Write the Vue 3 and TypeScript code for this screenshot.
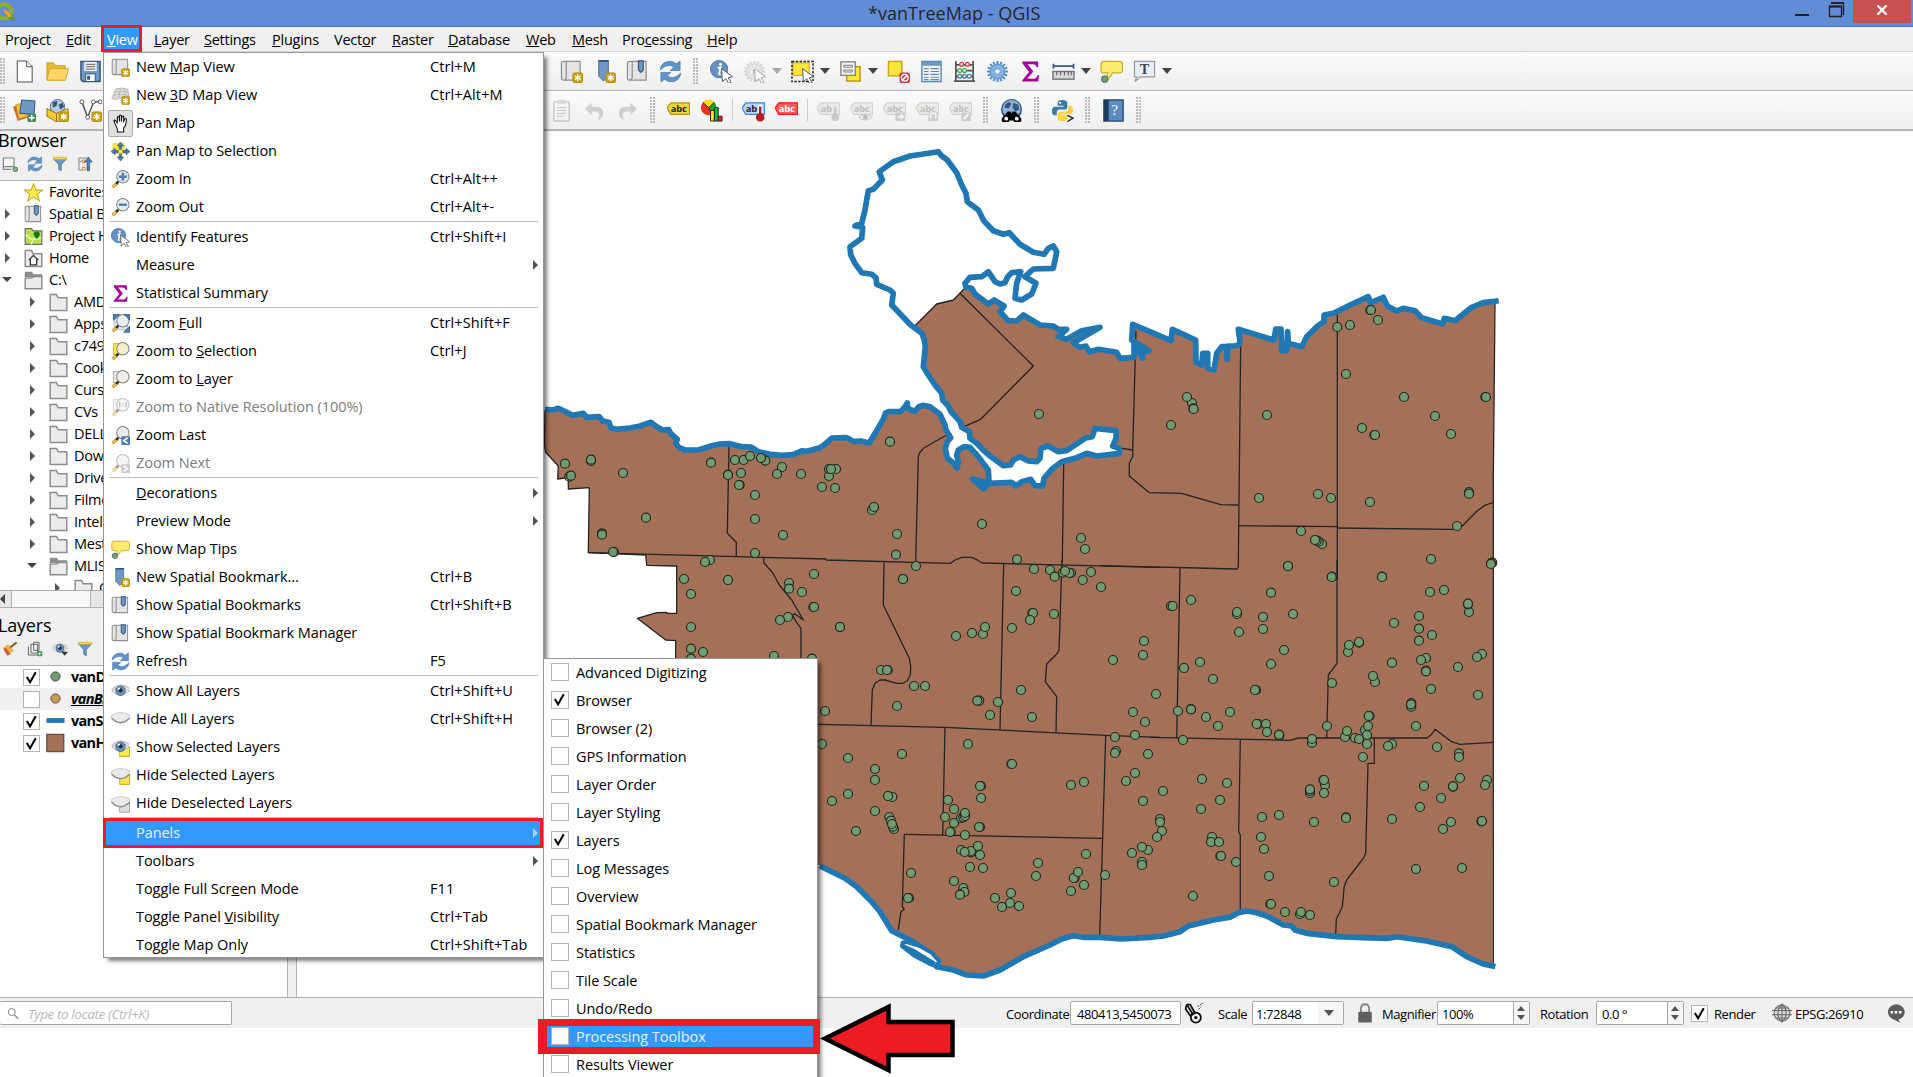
<script setup lang="ts">
interface Item {
  label: string
  key?: string
  icon?: string
  sub?: boolean
  off?: boolean
  sep?: boolean
  held?: boolean
  on?: boolean
}
interface Tool {
  icon: string
  kind?: 'arrow' | 'grip' | 'line' | 'gap'
  w?: number
  off?: boolean
}
interface Node {
  label: string
  icon: string
  level: number
  exp?: 'open' | 'closed'
}

const star = '<rect x="13.500" y="13.500" width="10" height="10" rx="1.500" fill="#c9a415" stroke="#b08c0c"/><path d="M18.500 15v7M15.500 16.700l6 3.600M21.500 16.700l-6 3.600" stroke="#fff" stroke-width="1.500"/>'
const lens = (fill: string) => `<path d="M8.500 15.500L2 22" stroke="#a8893a" stroke-width="4"/><path d="M8 16L2 22" stroke="#f0c94e" stroke-width="2"/><path d="M9.500 14.500l-3 3" stroke="#222" stroke-width="2.600"/><circle cx="15" cy="8.500" r="7.800" fill="${fill}" stroke="#808080" stroke-width="1.300"/>`
const cursor = '<path d="M12 9l11.500 8.500-4.500 1 3 5-2.500 1-3-5-3.500 3z" fill="#fff" stroke="#555" stroke-width="1"/>'
const book = '<path d="M1.500 3.500q0-2 2-2h3v17l-1.500 2.500h-1.500q-2 0-2-2zM6.500 1.500h14.500v19.500H5" fill="#e4e4e4" stroke="#909090" stroke-width="1.300"/>'
const ribbon = '<path d="M13 1h5v9.500l-2.500 2.500-2.500-2.500z" fill="#6d97c4" stroke="#38597f" stroke-width="1.300"/>'
const tag = (fill: string, line: string, txt: string, t = 'abc') => `<path d="M0 9.500L4 4h19.500v12H4z" fill="${fill}" stroke="${line}" stroke-width="1.300"/><text x="4" y="13.300" font-size="9.800" font-weight="bold" fill="${txt}" font-family="Open Sans, sans-serif">${t}</text>`
const eye = '<path d="M1 9.500Q11 -1 23 8" fill="none" stroke="#bbb" stroke-width="1.500"/><path d="M1 11.500Q12 1.500 23.500 11Q12 22 1 11.500z" fill="#e9e9e9" stroke="#aaa"/><circle cx="12" cy="11" r="6" fill="#6d93bd" stroke="#38597f"/><circle cx="12" cy="10.500" r="2.700" fill="#16293f"/><circle cx="10" cy="8.500" r="1.400" fill="#fff"/>'
const lid = '<path d="M.5 7Q11 0 23.500 6v4Q12 22 .5 9z" fill="#eaeae8" stroke="#c4c4c4"/><path d="M.5 10Q12 22 23.500 10" fill="none" stroke="#8d8d8d" stroke-width="1.800"/>'
const sync = '<path d="M1.500 10.500C1 3 11-2 18 4L22 1v10H11.500l4-3.500C11 4 5.500 6 1.500 10.500z" fill="#5f93cc" stroke="#4677aa" stroke-width=".7"/><path d="M22.500 13.500C23 21 13 26 6 20L2 23V13h10.500l-4 3.500C13 20 18.500 18 22.500 13.500z" fill="#5f93cc" stroke="#4677aa" stroke-width=".7"/>'
const bubble = '<path d="M4 1.500h16q3.500 0 3.500 3v6q0 3-3.500 3h-7q-2 5-7 7 2-3 2-7H4q-3 0-3-3v-6q0-3 3-3z" fill="#fcea6f" stroke="#c9ac2c" stroke-width="1.200"/><circle cx="5" cy="20" r="3.500" fill="#72a06d" stroke="#567"/>'
const gear = (fill: string, line: string) => `<path d="M12 1v22M1 12h22M4.200 4.200l15.600 15.600M19.800 4.200L4.200 19.800M7.800 1.900l8.400 20.200M16.200 1.900L7.800 22.100M1.900 7.800l20.200 8.400M22.100 7.800L1.900 16.200" stroke="${line}" stroke-width="2.200"/><circle cx="12" cy="12" r="7.500" fill="${fill}" stroke="${line}"/><circle cx="12" cy="12" r="3" fill="#f5f5f5" stroke="${line}"/>`
const folder = '<path d="M1.500 2h8l2 4H22.500v16H1.500z" fill="#ececec" stroke="#8c8c8c" stroke-width="1.800"/>'
const funnel = '<path d="M2 4h20l-8 9v9l-4-2v-7z" fill="#6d97c4" stroke="#45698f"/><path d="M2 2h20v3H2z" fill="#ffe54f" stroke="#c9a415"/>'
const slip = '<path d="M13 20l5 3 5-10v10H11z" fill="#ffe74f" stroke="#c9a415"/><rect x="11" y="12" width="12.500" height="11" fill="#ffe74f" stroke="#c9a415"/>'

const icons: Record<string, string> = {
  page: '<path d="M4.500 1h9.500l6 6v16h-15.500z" fill="#fff" stroke="#555" stroke-width="1.100"/><path d="M14 1v6h6" fill="#eee" stroke="#555"/>',
  open: '<path d="M1 21V3h7l2 3h10v15z" fill="#e8b836" stroke="#c59b28"/><path d="M1 21L4 9h19.500l-3 12z" fill="#fdd667" stroke="#d5a72e"/>',
  save: '<path d="M2 1.500h20V22.500H4l-2-2z" fill="#6d97c4" stroke="#35557a" stroke-width="1.500"/><rect x="5.500" y="2" width="13" height="9.500" fill="#f5f5f5"/><path d="M7 4.500h10M7 7h10M7 9.500h10" stroke="#555"/><rect x="7" y="14.500" width="10" height="8" fill="#f5f5f5" stroke="#35557a"/><rect x="8.500" y="16.500" width="3" height="4" fill="#35557a"/>',
  datasrc: '<path d="M0 8l12-4 5 15-12 4z" fill="#d8692a"/><path d="M3 6l13-3 3 14-13 4z" fill="#f5c13a" stroke="#b98a1e" stroke-width=".7"/><path d="M9 1l14 1-1 14-15-1z" fill="#6d97c4" stroke="#35557a"/><rect x="15" y="15" width="9" height="9" rx="1.500" fill="#4d8a58"/><path d="M19.500 16.500v6M16.500 19.500h6" stroke="#fff" stroke-width="1.500"/>',
  geopkg: '<circle cx="12" cy="8" r="7.500" fill="#b6cbe2" stroke="#4d6d92"/><path d="M7 3l5-1-1 5-4 2zM13 6l4-2 2 4-4 3z" fill="#35557a"/><path d="M1 10l10 5v9L1 18z" fill="#f2cb2f" stroke="#8c6f10"/><path d="M11 15l12-5v8l-12 6z" fill="#ffe461" stroke="#8c6f10"/>' + star,
  vnew: '<path d="M3 3l6 16L15 4l7-2" fill="none" stroke="#555" stroke-width="1.500"/><circle cx="3" cy="3" r="2" fill="#fff" stroke="#555"/><circle cx="9" cy="19" r="2" fill="#fff" stroke="#555"/><circle cx="15" cy="3" r="2" fill="#fff" stroke="#555"/><circle cx="22" cy="3" r="2" fill="#fff" stroke="#555"/>' + star,
  mapnew: book + star,
  map3d: '<path d="M6 4q7-3 15 0l2 10q-9-2-16 3l-6-1z" fill="#ddd" stroke="#aaa"/><path d="M5 8q8-3 17 0M3 12q8-3 19 0M12 3l-2 11M17 3l1 10" fill="none" stroke="#b4b4b4"/>' + star,
  hand: '<path d="M5 12L3.500 8.500q1-1.500 2.500 0l2 3V4q1-1.500 2.200 0l.5 5V2q1.200-1.500 2.300 0v7l1-6q1.300-1 2.200.500l-.400 6.500L17.500 6q1.300-.800 2 .8-.5 8-3.500 11v5H8v-4z" fill="#fff" stroke="#111" stroke-width="1.300" stroke-linejoin="round"/>',
  pansel: '<rect x="2" y="1" width="15" height="14" fill="#f7e23a"/><path d="M12 0l4 5h-8zM12 24l4-5h-8zM0 12l5-4v8zM24 12l-5-4v8zM10.500 5h3v4h-3zM10.500 15h3v4h-3zM5 10.500h4v3H5zM15 10.500h4v3h-4z" fill="#5380b0" stroke="#35557a" stroke-width=".8"/>',
  zoomin: lens('#dfe9f4') + '<path d="M15 3.500v10M10 8.500h10" stroke="#4f7fb3" stroke-width="3"/>',
  zoomout: lens('#e9edf2') + '<path d="M10 8.500h10" stroke="#4f7fb3" stroke-width="3"/>',
  identify: '<circle cx="9.500" cy="9.500" r="9" fill="#6490c3" stroke="#4d76a5"/><path d="M8 8.500l3-.8-1.500 7q0 1 1.500 0" fill="none" stroke="#fff" stroke-width="2"/><circle cx="11" cy="4.500" r="1.500" fill="#fff"/>' + cursor,
  sigma: '<path d="M3.500 1.500h16.500v6h-1.500q-.8-3-3.500-3H9l6 7.500-6.500 7.500h7q3 0 3.800-3.500h1.700l-1 6.500H3.500v-1.500l7-8.500-7-9z" fill="#a8009c"/>',
  zoomfull: '<path d="M4 2h17v18H4z" fill="#e3eaf2" stroke="#9fb4cb"/>' + lens('#e8edf3') + '<path d="M3 0h8L3 8zM24 0v8l-8-8zM24 23h-8l8-8z" fill="#4f7fb3" stroke="#35557a"/>',
  zoomsel: '<path d="M3 2h9v14H3z" fill="#ffe94f" stroke="#c9a415"/>' + lens('#f0efc8'),
  zoomlay: '<path d="M3 2h9v14H3z" fill="#ececec" stroke="#999"/>' + lens('#efefec'),
  zoomnat: '<path d="M3 2h9v14H3z" fill="#ececec" stroke="#999"/>' + lens('#efefec') + '<path d="M11 5v7M15 6v1M15 9v1M19 5v7" stroke="#777" stroke-width="1.500"/>',
  zoomlast: lens('#eceeec') + '<rect x="13" y="13" width="11" height="11" fill="#4f7fb3"/><path d="M21 15l-5 3.500 5 3.500" fill="none" stroke="#fff" stroke-width="2"/>',
  zoomnext: lens('#eceeec') + '<rect x="13" y="13" width="11" height="11" fill="#999"/><path d="M16 15l5 3.500-5 3.500" fill="none" stroke="#fff" stroke-width="2"/>',
  tips: bubble,
  bmnew: '<path d="M6 0h10v17l-5 5-5-5z" fill="#6d97c4" stroke="#4a6f99"/><path d="M6 1h10" stroke="#35557a" stroke-width="2"/>' + star,
  bm: book + ribbon,
  sync,
  eye,
  lid,
  eyesel: slip + eye,
  lidsel: slip + lid,
  liddes: '<rect x="11" y="12" width="12.500" height="11" fill="#ddd" stroke="#999"/>' + lid,
  play: gear('#e2e2e2', '#b5b5b5') + '<circle cx="12" cy="12" r="5" fill="#eee" stroke="#aaa"/><path d="M10 9l5 3-5 3z" fill="#999"/>' + cursor,
  select: '<path d="M2 3h17v13H2z" fill="#ffe53f" stroke="#c9a415"/><path d="M1 1.500h22v21H1z" fill="none" stroke="#222" stroke-width="1.500" stroke-dasharray="2.500 1.500"/>' + cursor,
  form: '<rect x="8" y="7" width="14" height="15" fill="#ffe53f" stroke="#b8960f" stroke-width="1.500"/><rect x="2" y="2" width="15" height="14" fill="#f3f3f3" stroke="#888" stroke-width="1.500"/><path d="M5 5.500h9v2H5zM5 10.500h9v2H5z" fill="#fff" stroke="#777"/>',
  desel: '<rect x="1.500" y="1.500" width="14" height="15" fill="#ffe53f" stroke="#c9a415" stroke-width="1.500"/><rect x="13" y="13" width="11" height="11" rx="2" fill="#d73a45"/><circle cx="18.500" cy="18.500" r="3.500" fill="none" stroke="#fff" stroke-width="1.500"/><path d="M16 21l5-5" stroke="#fff" stroke-width="1.500"/>',
  table: '<rect x="2" y="1.500" width="20" height="21" fill="#f4f8fc" stroke="#5c88b8" stroke-width="1.500"/><path d="M2 2h20v4H2z" fill="#6d97c4"/><path d="M4 9h5M11 9h9M4 12h5M11 12h9M4 15h5M11 15h9M4 18h5M11 18h9M4 20.500h5M11 20.500h9" stroke="#5c88b8" stroke-width="1.300"/>',
  abacus: '<path d="M3 1v20M21 1v20M1 22h22M3 5h18M3 11h18M3 17h18" stroke="#555" stroke-width="1.800"/><g fill="#fff" stroke-width="1.300"><circle cx="9" cy="4.500" r="2" stroke="#d33"/><circle cx="15" cy="4.500" r="2" stroke="#d33"/><circle cx="7" cy="11" r="2" stroke="#4a4"/><circle cx="12" cy="11" r="2" stroke="#4a4"/><circle cx="7" cy="17" r="2" stroke="#47a"/><circle cx="12" cy="17" r="2" stroke="#47a"/><circle cx="17" cy="17" r="2" stroke="#47a"/></g>',
  gear: gear('#86b2e2', '#5b8fc9'),
  ruler: '<path d="M1 6.500h22M1.500 4v5M22.500 4v5" stroke="#3a5980" stroke-width="1.800"/><rect x="1" y="12" width="22" height="8" fill="#d9d9d9" stroke="#777" stroke-width="1.500"/><path d="M5 12v4M9 12v4M13 12v4M17 12v4M20 12v4" stroke="#555"/>',
  note: '<path d="M1.500 1.500h21v16H8L2 22.500l2-5H1.500z" fill="#e8eef5" stroke="#999" stroke-width="1.300"/><text x="7" y="14.500" font-size="15" font-weight="bold" fill="#444" font-family="Liberation Serif, serif">T</text>',
  paste: '<rect x="4" y="3" width="16" height="20" rx="1" fill="#f4f4f4" stroke="#999" stroke-width="1.500"/><rect x="8" y="1" width="8" height="4" fill="#bbb"/><path d="M7 9h10M7 12h10M7 15h10M7 18h7" stroke="#999"/>',
  undo: '<path d="M9 4v4h5q7 0 7 7 0 5-6 7 2-2 2-5 0-4-4-4H9v4L2 10z" fill="#b0a9a9"/>',
  redo: '<path d="M15 4v4h-5q-7 0-7 7 0 5 6 7-2-2-2-5 0-4 4-4h4v4l7-7z" fill="#a9ada9"/>',
  abc: tag('#f0d43a', '#b39510', '#222'),
  diagram: '<circle cx="9" cy="9" r="8" fill="#e32"/><path d="M9 9L3 3.500A8 8 0 0 1 15 3.500z" fill="#ffe000"/><path d="M9 9L15 3.500A8 8 0 0 1 13 16z" fill="#1a2"/><path d="M9 9L3 3.500M9 9l6-5.500M9 9l4 7" stroke="#222"/><path d="M11 12h4v11h-4z" fill="#fe0" stroke="#222"/><path d="M15 9h4v14h-4z" fill="#1b3" stroke="#222"/><path d="M19 18h4v5h-4z" fill="#e22" stroke="#222"/>',
  abpin: tag('#b9d7ff', '#3b83e6', '#222', 'ab') + '<path d="M19 6v11" stroke="#fff" stroke-width="4"/><path d="M19 8v9" stroke="#a22" stroke-width="2.500"/><circle cx="19" cy="19" r="4.500" fill="#b31f1f"/>',
  abred: tag('#ff5d5d', '#ff1515', '#fff'),
  dpin: tag('#e0e0da', '#b5b5a8', '#888', 'ab') + '<path d="M19 8v9" stroke="#999" stroke-width="2.500"/><circle cx="19" cy="19" r="4" fill="#a5a0a0"/>',
  deye: tag('#e0e0da', '#b5b5a8', '#888') + '<path d="M9 19q7-6 14 0-7 6-14 0z" fill="#eee" stroke="#999"/><circle cx="16" cy="19" r="2.500" fill="#888"/>',
  dmove: tag('#e0e0da', '#b5b5a8', '#888') + '<rect x="13" y="14" width="10" height="9" fill="#aaa"/><path d="M15 18.500h6M18.500 16l2.500 2.500-2.500 2.500" stroke="#fff" fill="none" stroke-width="1.500"/>',
  drot: tag('#e0e0da', '#b5b5a8', '#888') + '<rect x="13" y="14" width="10" height="9" fill="#aaa"/><path d="M16 20a3 3 0 1 1 4 0" stroke="#fff" fill="none" stroke-width="1.500"/>',
  dedit: tag('#e0e0da', '#b5b5a8', '#888') + '<rect x="13" y="14" width="10" height="9" fill="#aaa"/><path d="M15.500 21l5-5.500" stroke="#fff" stroke-width="1.800"/>',
  meta: '<circle cx="12" cy="11" r="11" fill="#35557a"/><circle cx="12" cy="10.500" r="9.500" fill="#8fb3da"/><path d="M5 6l4-3 3 2-3 5-4-1zM14 4l5 2 1 5-4 2-3-4z" fill="#35557a"/><path d="M8 13h3l1 2 1-2h3l6 7a4 4 0 0 1-8 2.500h-4a4 4 0 0 1-8-2.500z" fill="#000"/><circle cx="6.500" cy="20.500" r="2" fill="#fff"/><circle cx="17.500" cy="20.500" r="2" fill="#fff"/>',
  python: '<path d="M11.500 1Q7 1 7 4v3h6v1H4q-3 0-3 5 0 4 3 4h2v-3q0-3 3-3h5q3 0 3-3V4q0-3-5.500-3z" fill="#3b77a8"/><circle cx="9.500" cy="4" r="1.100" fill="#fff"/><path d="M12.500 23q4.500 0 4.500-3v-3h-6v-1h9q3 0 3-4 0-5-3-5h-2v3q0 3-3 3h-5q-3 0-3 3v4q0 3 5.500 3z" fill="#ffd243"/><path d="M17 17l6 3-6 3.500" fill="none" stroke="#333" stroke-width="1.500"/>',
  help: '<rect x="2" y="1" width="20" height="22" fill="#5a8cc4" stroke="#2f4d72" stroke-width="1.500"/><rect x="2" y="1" width="5" height="22" fill="#1f3b5a"/><text x="10" y="17" font-size="15" fill="#fff" font-family="Liberation Serif, serif">?</text>',
  addlayer: '<path d="M2 3h16v13H2z" fill="#f5f5f5" stroke="#888" stroke-width="1.800"/><path d="M2 15v5h12" fill="none" stroke="#888" stroke-width="1.800"/><circle cx="20" cy="20" r="3.500" fill="#7fb583" stroke="#4d8a58" stroke-width="1.500"/>',
  funnel,
  collapse: '<path d="M3 3v18h5M3 8h4M3 3h16" fill="none" stroke="#888" stroke-width="1.500"/><path d="M8 6h4v4H8zM8 17h4v4H8z" fill="#fff" stroke="#e08020" stroke-width="1.500"/><path d="M17 2l6 7h-4v13h-4V9h-4z" fill="#5380b0" stroke="#35557a"/>',
  fav: '<path d="M12 1l3 8h8.500l-6.800 5 2.600 8.500L12 17.500l-7.300 5L7.300 14 .5 9H9z" fill="#fff04d" stroke="#cba61c" stroke-width="1.300"/>',
  projhome: '<path d="M1.500 2h8l2 3H22.500v17H1.500z" fill="#b8e04a" stroke="#6b6b6b" stroke-width="1.500"/><path d="M2 10l8 6 12-2M9 22l3-8" fill="none" stroke="#eaf7c0" stroke-width="2"/><path d="M12 8q5-5 8 0 0 5-4 7-4-3-4-7z" fill="#157a1c"/>',
  home: folder + '<path d="M6 14l6-6 6 6M8 13v7h8v-7" fill="#fff" stroke="#333" stroke-width="1.600"/>',
  folder,
  opened: '<path d="M1 1h9l2 3h11v4H1z" fill="#8c8c8c"/><path d="M1.500 9h8l3-2h10v15.500H1.500z" fill="#ececec" stroke="#8c8c8c" stroke-width="1.800"/>',
  style: '<path d="M1 10l8-5 8 9-7 7z" fill="#f2c23c"/><path d="M2 12l4-2 7 10-5 2z" fill="#e0573a"/><path d="M12 10L22 2" stroke="#9a6a2c" stroke-width="3.500"/><path d="M7 7l9 9" stroke="#d8b15a" stroke-width="4"/>',
  addgroup: '<path d="M2 8v13h13M6 5v13h10V5z M10 2v12h8V2z" fill="#eee" stroke="#666" stroke-width="1.500"/><rect x="15" y="15" width="8" height="8" rx="2" fill="#4d9a58"/><path d="M19 16.500v5M16.500 19h5" stroke="#fff"/>',
  eyemenu: eye + '<path d="M14 16h10l-5 6z" fill="#333"/>',
  lock: '<path d="M6.500 11V7q0-5.500 5.500-5.500T17.500 7v4" fill="none" stroke="#888" stroke-width="2.500"/><rect x="3" y="10.500" width="18" height="13" rx="1.500" fill="#5f5f5f"/>',
  globe: '<circle cx="12" cy="12" r="9.500" fill="#ddd" stroke="#777" stroke-width="1.500"/><path d="M0 9h24M0 14h24M4 6h16M4 18h16M12 1v22M12 1q-10 11 0 22M12 1q10 11 0 22" fill="none" stroke="#666" stroke-width="1.300"/>',
  chat: '<path d="M12 1.500a11 9.500 0 0 1 3 18.500l2 4-7-4a11 9.500 0 0 1 2-18.500z" fill="#5c5c5c"/><path d="M5.500 11h3M10.500 11h3M15.500 11h3" stroke="#fff" stroke-width="3"/>',
  track: '<g fill="none" stroke="#111" stroke-width="2"><path d="M3 8l5 7 5-3-5-9q-5-2-5 5zM5 4l6 10"/><circle cx="14" cy="17" r="5.500"/></g><circle cx="14" cy="17" r="1.800"/><path d="M16 5l6-4M17 8l3-3" stroke="#111" stroke-dasharray="2 1"/>',
  find: '<circle cx="9.500" cy="9" r="7" fill="none" stroke="#888" stroke-width="2"/><path d="M14.500 14.500l8 8" stroke="#888" stroke-width="2.500"/>',
}

const bar = ['Pro_ject', '_Edit', '_View', '_Layer', '_Settings', '_Plugins', 'Vect_or', '_Raster', '_Database', '_Web', '_Mesh', 'Pro_cessing', '_Help']

const menu: Item[] = [
  { label: 'New _Map View', key: 'Ctrl+M', icon: 'mapnew' },
  { label: 'New _3D Map View', key: 'Ctrl+Alt+M', icon: 'map3d' },
  { label: 'Pan Map', icon: 'hand', held: true },
  { label: 'Pan Map to Selection', icon: 'pansel' },
  { label: 'Zoom In', key: 'Ctrl+Alt++', icon: 'zoomin' },
  { label: 'Zoom Out', key: 'Ctrl+Alt+-', icon: 'zoomout' },
  { label: 'Identify Features', key: 'Ctrl+Shift+I', icon: 'identify', sep: true },
  { label: 'Measure', sub: true },
  { label: 'Statistical Summary', icon: 'sigma' },
  { label: 'Zoom _Full', key: 'Ctrl+Shift+F', icon: 'zoomfull', sep: true },
  { label: 'Zoom to _Selection', key: 'Ctrl+J', icon: 'zoomsel' },
  { label: 'Zoom to _Layer', icon: 'zoomlay' },
  { label: 'Zoom to Native Resolution (100%)', icon: 'zoomnat', off: true },
  { label: 'Zoom Last', icon: 'zoomlast' },
  { label: 'Zoom Next', icon: 'zoomnext', off: true },
  { label: '_Decorations', sub: true, sep: true },
  { label: 'Preview Mode', sub: true },
  { label: 'Show Map Tips', icon: 'tips' },
  { label: 'New Spatial Bookmark...', key: 'Ctrl+B', icon: 'bmnew' },
  { label: 'Show Spatial Bookmarks', key: 'Ctrl+Shift+B', icon: 'bm' },
  { label: 'Show Spatial Bookmark Manager', icon: 'bm' },
  { label: 'Refresh', key: 'F5', icon: 'sync' },
  { label: 'Show All Layers', key: 'Ctrl+Shift+U', icon: 'eye', sep: true },
  { label: 'Hide All Layers', key: 'Ctrl+Shift+H', icon: 'lid' },
  { label: 'Show Selected Layers', icon: 'eyesel' },
  { label: 'Hide Selected Layers', icon: 'lidsel' },
  { label: 'Hide Deselected Layers', icon: 'liddes' },
  { label: 'Panels', sub: true, sep: true, on: true },
  { label: 'Toolbars', sub: true },
  { label: 'Toggle Full Scr_een Mode', key: 'F11' },
  { label: 'Toggle Panel _Visibility', key: 'Ctrl+Tab' },
  { label: 'Toggle Map Only', key: 'Ctrl+Shift+Tab' },
]

const panels = ['Advanced Digitizing', 'Browser', 'Browser (2)', 'GPS Information', 'Layer Order', 'Layer Styling', 'Layers', 'Log Messages', 'Overview', 'Spatial Bookmark Manager', 'Statistics', 'Tile Scale', 'Undo/Redo', 'Processing Toolbox', 'Results Viewer']
const shown = ['Browser', 'Layers']

const gap = (w: number): Tool => ({ icon: '', kind: 'gap', w })
const grip: Tool = { icon: '', kind: 'grip' }
const line: Tool = { icon: '', kind: 'line' }
const arrow: Tool = { icon: '', kind: 'arrow' }
const t = (icon: string, off = false): Tool => ({ icon, off })

const row1: Tool[] = [
  grip, t('page'), t('open'), t('save'), gap(448), t('mapnew'), t('bmnew'), t('bm'), t('sync'), gap(6), grip,
  t('identify'), t('play', true), { ...arrow, off: true }, t('select'), arrow, t('form'), arrow, t('desel'), t('table'),
  t('abacus'), t('gear'), t('sigma'), t('ruler'), arrow, t('tips'), t('note'), arrow,
]
const row2: Tool[] = [
  grip, t('datasrc'), t('geopkg'), t('vnew'), gap(438), t('paste', true), t('undo', true), t('redo', true), gap(6), grip,
  t('abc'), t('diagram'), gap(3), line, gap(3), t('abpin'), t('abred'), gap(3), line, gap(3),
  t('dpin', true), t('deye', true), t('dmove', true), t('drot', true), t('dedit', true), gap(6), grip, t('meta'),
  gap(6), grip, t('python'), gap(6), grip, t('help'), gap(6), grip,
]

const tree: Node[] = [
  { label: 'Favorites', icon: 'fav', level: 0 },
  { label: 'Spatial Bookmarks', icon: 'bm', level: 0, exp: 'closed' },
  { label: 'Project Home', icon: 'projhome', level: 0, exp: 'closed' },
  { label: 'Home', icon: 'home', level: 0, exp: 'closed' },
  { label: 'C:\\', icon: 'opened', level: 0, exp: 'open' },
  ...['AMD', 'Apps', 'c749', 'Cookies', 'Cursor', 'CVs', 'DELL', 'Downloads', 'Drivers', 'Filmes', 'Intel', 'Mestrado'].map(
    (label): Node => ({ label, icon: 'folder', level: 1, exp: 'closed' }),
  ),
  { label: 'MLIS', icon: 'opened', level: 1, exp: 'open' },
  { label: 'Courses', icon: 'folder', level: 2, exp: 'closed' },
]

const layers = [
  { label: 'vanDrinking', on: true, shape: 'dot', color: '#729b6f' },
  { label: 'vanBike', on: false, shape: 'dot', color: '#c89b57', active: true },
  { label: 'vanShore', on: true, shape: 'line', color: '#1f78b4' },
  { label: 'vanHoods', on: true, shape: 'area', color: '#a57058' },
]

// "_" marks the mnemonic letter of a label
function parts(label: string) {
  const i = label.indexOf('_')
  return i < 0 ? [label, '', ''] : [label.slice(0, i), label[i + 1], label.slice(i + 2)]
}

// Map data is digitised per sheet: an origin on the canvas and third-pixel offsets
type Pt = [number, number]
const sheets: Record<string, Pt> = { A: [540, 380], B: [840, 140], C: [1100, 280], D: [820, 560], E: [1150, 560] }
function at(sheet: string, src: string): Pt[] {
  const [ox, oy] = sheets[sheet]
  return src.trim().split(/\s+/).map((p) => {
    const [x, y] = p.split(',').map(Number)
    return [ox + x / 3, oy + y / 3] as Pt
  })
}
const join = (pts: Pt[]) => pts.map(([x, y]) => `${x.toFixed(1)},${y.toFixed(1)}`).join(' ')

const west = at('A', '15,88 38,90 55,85 80,97 98,106 130,100 140,112 178,110 188,123 207,127 212,143 228,148 270,144 300,138 333,127 350,140 368,150 386,149 392,160 412,178 407,190 418,203 435,210 475,210 515,197 540,192 570,191 605,200 634,201 655,215 690,223 725,226 760,224 787,212 800,214 840,203 858,190 875,174 920,173 940,184 962,183 988,189 1008,155 1030,118 1036,100 1045,95 1082,94 1092,84 1102,69 1103,85 1125,94 1137,80 1150,76 1170,80 1200,103')
const creek = at('B', '300,823 315,855 318,870 332,893 322,905 316,925 322,955 340,968 351,985 355,965 350,945 355,930 372,920 390,922 415,950 445,990 447,1025 432,1047 398,1017 447,1030 515,1027 528,1038 545,1025 572,1018 585,1037 608,1038 612,1015 635,988 665,965 710,953 740,940 770,948 838,940 838,925 818,918 828,895 828,872 765,865 757,890 735,895 710,912 680,932 655,935 625,918 603,925 600,955 590,965 565,963 540,950 520,960 512,975 490,977 455,952 435,935 410,910 390,895 388,875 365,862 360,845 333,815 325,798 308,780 305,760 285,735 265,705 250,680 256,620 253,600 245,580 212,555')
const park = at('B', '212,555 155,495 160,460 150,450 110,433 108,413 95,403 65,398 45,370 32,345 30,320 65,295 68,262 45,258 65,250 75,210 85,152 100,148 127,120 118,95 160,65 210,48 245,43 295,35 305,48 320,58 350,98 365,135 378,160 382,185 415,210 432,243 460,272 490,283 508,278 540,313 580,337 612,343 625,325 640,318 650,335 640,385 580,387 555,410 588,430 575,462 545,480 525,475 530,430 542,395 515,398 503,410 495,428 480,432 465,425 445,395 425,410 390,412 375,430 378,442')
const parkEdge = at('B', '225,557 290,492 340,480 372,447')
const port = at('B', '378,442 395,445 405,462 445,492 462,480 492,498 480,515 505,542 530,543 550,525 600,555 640,558 655,568 680,568 655,590 680,598 725,572 780,562 700,608 718,622 738,618 748,636 775,628 830,637 840,655 882,652 882,608 908,655 908,635 927,632 875,600 878,553 993,602 997,568 1067,600 1068,668 1085,675 1088,640 1103,640 1103,685 1122,690 1130,640 1145,620 1160,620 1161,658 1163,618 1185,618')
const east = at('C', '415,195 420,185 415,148 522,180 527,147 543,147 545,212 560,212 563,155 565,190 605,200 620,170 650,140 672,125 672,105 700,100 740,80 805,50 812,68 850,52 862,78 890,93 910,85 945,92 965,113 1028,132 1033,115 1065,122 1115,82 1150,68 1184,64')
const south = [
  ...at('E', '1028,1218 1000,1212 950,1190 905,1160 830,1143 740,1130 715,1135 640,1133 560,1130 470,1120 435,1110 425,1098 400,1095 350,1068 320,1058 290,1053 265,1058 240,1072 190,1080 115,1098 90,1115 40,1128 0,1132'),
  ...at('D', '905,1137 840,1132 790,1132 760,1127 725,1137 690,1155 610,1190 540,1230 490,1248 440,1245 400,1230 350,1220 335,1200 310,1165 270,1140 215,1112 180,1055 155,1025 110,980 75,955 0,918'),
]
const westEdge = at('A', '407,835 407,782 377,780 292,715 350,698 380,697 380,700 410,700 410,558 320,556 317,525 145,518 148,323 85,327 85,293 53,297 55,258 17,217 13,190 15,90')
const land = join([...west, ...creek, ...parkEdge, ...port, ...east, ...at('C', '1180,600'), ...south, [676, 780], ...westEdge])
const shore = join([...west, ...creek, ...park, ...port, ...east, ...at('C', '1196,62')])
const river = join([...at('E', '1036,1220'), ...south])
const island = join(at('D', '246,1158 248,1148 262,1146 300,1158 335,1178 358,1203 350,1218 330,1212 285,1188 246,1158 280,1172 345,1212'))

const bounds = [
  westEdge,
  parkEdge,
  at('A', '567,200 562,460 589,487 589,528'),
  at('A', '145,518 858,537 858,540 1232,550 1245,540 1265,532 1295,532 1312,540 1327,549 1860,562'),
  at('A', '671,532 671,548 698,578 718,615 755,660 790,720 765,702 757,704 770,728 783,745 783,835'),
  at('A', '1230,160 1200,176 1150,205 1138,220 1135,230 1127,545'),
  at('B', '360,460 580,678 422,838 372,860'),
  at('B', '888,572 878,930 878,950 868,970 868,1008 928,1058 1025,1060 1142,1094 1195,1095'),
  at('B', '845,925 878,930'),
  at('B', '671,965 667,1270'),
  at('C', '422,190 415,860 412,867 0,857'),
  at('C', '415,737 712,740'),
  at('C', '712,100 712,900'),
  at('C', '712,744 1060,748 1087,738 1130,694 1155,676 1180,667'),
  at('C', '1185,70 1180,600 1180,2055'),
  at('D', '192,8 190,135 268,295 272,320 271,345 262,362 248,370 230,370 195,360 180,360 165,370 157,390 153,495'),
  at('D', '551,10 540,510'),
  at('D', '726,0 717,270 710,282 680,312 676,365 710,410 708,518'),
  at('D', '-180,488 0,493 375,502 857,526 1020,532'),
  at('D', '375,502 368,825'),
  at('D', '253,823 848,835'),
  at('D', '857,526 839,1127'),
  at('D', '253,823 247,1040 253,1048 243,1055 235,1110'),
  at('E', '90,25 80,535'),
  at('E', '561,0 561,310 535,345 530,535'),
  at('E', '0,532 420,541 445,534 830,534 843,525 855,508 905,545 930,553 1030,547'),
  at('E', '271,540 266,815 271,825 271,1053'),
  at('E', '673,535 673,610 654,610 647,880 640,895 590,960 583,978 577,1040 559,1078 557,1125'),
].map(join)

const trees: Pt[] = [
  ...at('A', '75,251 153,243 153,239 249,279 88,290 93,287 318,413 186,460 186,464 222,516 219,516 513,248 585,240 611,240 630,228 676,242 663,234 726,261 711,282 783,282 603,279 564,284 564,285 599,315 597,315 645,345 645,417 729,465 645,519 867,288 888,267 867,267 873,267 846,321 885,324 996,390 1002,381 1050,185 1071,462 1068,524 1128,558 1089,597 510,540 495,546 432,597 453,642 564,600 747,609 747,626 822,582 786,636 820,681 822,681 744,711 720,720 900,741 453,741 453,806 489,816 453,836 702,828 816,836 1326,432 1623,474 1635,507'),
  ...at('B', '597,822'),
  ...at('C', '811,90 813,90 834,120 750,135 712,141 738,282 912,351 1156,351 1158,351 1005,408 1053,462 786,444 823,465 825,465 501,405 477,654 654,642 693,654 810,666 1107,636 1107,641 1071,738 603,753 666,792 656,785 650,782 645,780 564,858 696,890 846,890 993,837 1177,848 1173,850 1173,852 276,369 261,351 280,385 281,387 213,435'),
  ...at('D', '249,57 60,201 183,330 203,330 201,330 282,378 315,378 231,438 15,453 408,228 456,219 489,222 495,201 478,422 472,422 534,426 510,465 642,27 690,30 704,50 729,38 753,39 748,39 735,33 788,60 813,36 843,81 588,93 637,159 639,159 630,180 702,162 576,204 603,390 636,471 591,-2 972,243 969,285 879,300 1008,402 939,456 975,486 945,525 885,531 888,573 885,579 984,582 945,639 918,663 969,723 444,552 574,612 576,612 483,678 480,678 483,714 384,720 402,747 375,771 402,789 423,774 430,772 435,768 435,759 392,816 390,816 480,801 477,801 435,825 753,675 792,666 6,552 84,594 246,582 165,627 165,660 84,702 36,723 165,753 217,711 204,708 108,813 208,771 213,782 222,807 219,800 216,792 423,870 453,877 453,873 434,876 474,858 480,885 450,921 489,924 273,939 267,1014 264,1014 402,963 430,984 433,996 420,1004 525,1014 546,1041 570,1029 573,999 597,1038 654,909 648,948 764,954 761,954 774,936 792,975 753,993 798,882 855,945 936,879 984,870 966,861 966,906 966,915'),
  ...at('E', '414,18 545,51 696,51 840,96 882,90 957,156 954,133 954,131 807,168 807,206 807,242 732,189 846,225 363,98 261,162 261,156 339,171 339,207 429,162 267,216 123,120 63,138 68,138 402,270 363,312 594,276 597,255 627,248 627,246 726,308 828,294 813,300 828,332 828,334 996,282 981,291 924,321 150,306 102,324 189,357 318,390 315,390 84,453 123,447 123,448 168,471 204,498 240,456 546,369 675,366 669,348 784,440 784,429 783,433 843,387 984,405 798,498 531,498 325,492 320,492 348,492 351,516 388,527 387,524 99,540 486,548 486,537 585,531 591,513 659,468 656,468 645,510 654,498 651,525 615,534 627,537 651,552 639,591 726,552 714,558 861,561 927,580 927,591 156,657 231,669 39,693 210,720 153,747 30,777 30,786 36,813 21,831 480,699 480,693 480,688 525,675 520,660 522,660 522,699 336,771 387,765 492,786 588,772 588,774 333,831 342,867 186,831 183,846 207,846 211,888 213,888 258,906 357,948 552,966 129,1008 361,1032 363,1032 405,1056 450,1062 453,1056 480,1065 726,777 822,678 930,654 909,680 909,679 873,714 810,741 1011,660 1005,675 903,786 879,807 994,784 996,783 798,927 936,924'),
]
</script>

<template>
  <div class="screen">
    <header class="title">
      <svg class="logo" viewBox="0 0 24 24"><circle cx="9" cy="10.500" r="9" fill="none" stroke="#8fae2b" stroke-width="5" /><path d="M9 9l5 1 9 9-4 4-9-9z" fill="#5c9a3c" /><path d="M8 8l7 3 4 6-4 1-5-5z" fill="#f0a030" /></svg>
      <span class="name">*vanTreeMap - QGIS</span>
      <svg class="ctl" viewBox="0 0 60 24" width="60" height="24"><path d="M2 15h14" stroke="#222" stroke-width="2" /><path d="M36.500 6.500h12v10h-12z M38 3h12.500v12" fill="none" stroke="#222" stroke-width="1.400" /><path d="M36 6.500h13M38 3h13" stroke="#222" stroke-width="2" /></svg>
      <span class="close"><svg viewBox="0 0 12 10" width="12" height="10"><path d="M1.500.500l9 9M10.500.500l-9 9" stroke="#fff" stroke-width="2.300" /></svg></span>
    </header>

    <nav class="menubar">
      <span v-for="(m, i) in bar" :key="m" class="head" :class="['h' + i, { active: m === '_View' }]"><b>{{ parts(m)[0] }}</b><u>{{ parts(m)[1] }}</u><b>{{ parts(m)[2] }}</b></span>
    </nav>

    <div v-for="(row, r) in [row1, row2]" :key="r" class="tools" :class="{ last: r === 1 }">
      <template v-for="(x, i) in row" :key="i">
        <i v-if="x.kind === 'gap'" class="gap" :style="{ width: x.w + 'px' }"></i>
        <i v-else-if="x.kind === 'grip'" class="grip"></i>
        <i v-else-if="x.kind === 'line'" class="rule"></i>
        <i v-else-if="x.kind === 'arrow'" class="drop" :class="{ off: x.off }"></i>
        <span v-else class="tool" :class="{ off: x.off }"><svg viewBox="0 0 24 24" v-html="icons[x.icon]"></svg></span>
      </template>
    </div>

    <main class="work">
      <aside class="dock">
        <h2>Browser</h2>
        <div class="mini"><svg v-for="n in ['addlayer', 'sync', 'funnel', 'collapse']" :key="n" viewBox="0 0 24 24" v-html="icons[n]"></svg></div>
        <div class="tree">
          <div v-for="n in tree" :key="n.label" class="node" :class="'l' + n.level">
            <i class="exp" :class="n.exp"></i>
            <svg viewBox="0 0 24 24" v-html="icons[n.icon]"></svg>
            <span>{{ n.label }}</span>
          </div>
        </div>
        <div class="hscroll"><i class="left"></i><i class="thumb"></i></div>
        <h2 class="second">Layers</h2>
        <div class="mini"><svg v-for="n in ['style', 'addgroup', 'eyemenu', 'funnel']" :key="n" viewBox="0 0 24 24" v-html="icons[n]"></svg></div>
        <div class="layers">
          <div v-for="l in layers" :key="l.label" class="layer" :class="{ active: l.active }">
            <span class="box"><svg v-if="l.on" viewBox="0 0 16 16"><path d="M3 7.500l3.500 5.500L12.500 2.500" fill="none" stroke="#000" stroke-width="2.200" /></svg></span>
            <svg class="sym" viewBox="0 0 20 20">
              <circle v-if="l.shape === 'dot'" cx="10" cy="9.500" r="4.900" :fill="l.color" stroke="#232323" stroke-opacity=".7" />
              <path v-else-if="l.shape === 'line'" d="M.5 9.500h19" :stroke="l.color" stroke-width="5" />
              <rect v-else x=".8" y=".8" width="18" height="18.400" :fill="l.color" stroke="#4a342b" />
            </svg>
            <strong>{{ l.label }}</strong>
          </div>
        </div>
      </aside>
      <section class="canvas">
        <svg viewBox="297 131 1616 866" width="1616" height="866">
          <polygon :points="land" fill="#a57058" />
          <polyline v-for="(b, i) in bounds" :key="i" :points="b" fill="none" stroke="#232323" stroke-width="1.300" stroke-linejoin="round" />
          <g fill="none" stroke="#1f78b4" stroke-width="5.700" stroke-linejoin="round">
            <polyline :points="shore" />
            <polyline :points="river" />
            <polyline :points="island" fill="#fff" stroke-width="4.200" />
          </g>
          <circle v-for="(p, i) in trees" :key="i" :cx="p[0]" :cy="p[1]" r="4.500" fill="#729b6f" stroke="#232823" stroke-width="1.200" />
        </svg>
      </section>
    </main>

    <footer class="status">
      <span class="locate"><svg viewBox="0 0 24 24" v-html="icons.find"></svg><em>Type to locate (Ctrl+K)</em></span>
      <span class="lab s1">Coordinate</span>
      <span class="field f1">480413,5450073</span>
      <svg class="track" viewBox="0 0 24 24" v-html="icons.track"></svg>
      <span class="lab s2">Scale</span>
      <span class="field f2">1:72848<i class="combo"></i></span>
      <svg class="lock" viewBox="0 0 24 24" preserveAspectRatio="none" v-html="icons.lock"></svg>
      <span class="lab s3">Magnifier</span>
      <span class="field f3">100%<i class="spin"></i></span>
      <span class="lab s4">Rotation</span>
      <span class="field f4">0.0 °<i class="spin"></i></span>
      <span class="box chk"><svg viewBox="0 0 16 16"><path d="M3 7.500l3.500 5.500L12.500 2.500" fill="none" stroke="#000" stroke-width="2.200" /></svg></span>
      <span class="lab s5">Render</span>
      <svg class="globe" viewBox="0 0 24 24" v-html="icons.globe"></svg>
      <span class="lab s6">EPSG:26910</span>
      <svg class="chat" viewBox="0 0 24 24" v-html="icons.chat"></svg>
    </footer>

    <div class="menu">
      <template v-for="m in menu" :key="m.label">
        <i v-if="m.sep" class="sep"></i>
        <div class="item" :class="{ off: m.off, on: m.on }">
          <span class="ico" :class="{ held: m.held }"><svg v-if="m.icon" viewBox="0 0 24 24" v-html="icons[m.icon]"></svg></span>
          <span class="text">{{ parts(m.label)[0] }}<u>{{ parts(m.label)[1] }}</u>{{ parts(m.label)[2] }}</span>
          <span class="key">{{ m.key }}</span>
          <i v-if="m.sub" class="more"></i>
        </div>
      </template>
    </div>

    <div class="submenu">
      <div v-for="p in panels" :key="p" class="pitem" :class="{ on: p === 'Processing Toolbox' }">
        <span class="box"><svg v-if="shown.includes(p)" viewBox="0 0 16 16"><path d="M3 7.500l3.500 5.500L12.500 2.500" fill="none" stroke="#000" stroke-width="2.200" /></svg></span>
        <span>{{ p }}</span>
      </div>
    </div>
    <div class="mark"></div>
    <svg class="pointer" viewBox="0 0 136 74" width="136" height="74"><path d="M5 36.500L68.500 5v15h64v33h-64V68z" fill="#ed1c24" stroke="#000" stroke-width="4.500" /></svg>
  </div>
</template>

<style>
body { margin: 0; background: #fff; overflow: hidden; }
</style>

<style scoped>
.screen { position: relative; width: 1913px; height: 1077px; overflow: hidden; display: flex; flex-direction: column; background: #fff; color: #000; font: 14.500px/20px "Open Sans", "Noto Sans", sans-serif; letter-spacing: -0.25px; white-space: nowrap; }
.screen * { box-sizing: border-box; }
svg { display: block; flex: none; }
b { font-weight: normal; }

.title { position: relative; display: flex; height: 27px; flex: none; background: #628cd6; border-bottom: 1px solid #4c73b8; }
.logo { width: 19px; height: 21px; margin: 2px 0 0 -3px; }
.name { width: 172px; margin-left: 852px; font-size: 18px; line-height: 27px; color: #262626; letter-spacing: 0.03px; }
.ctl { margin-left: 753px; margin-top: 0; }
.close { width: 58px; height: 23px; display: flex; align-items: center; justify-content: center; padding-bottom: 4px; background: #c75050; }

.menubar { display: flex; height: 25px; flex: none; background: #f0f0f0; border-bottom: 1px solid #d6d6d6; line-height: 25px; }
.head { display: block; width: 50px; }
.h0 { width: 61px; padding-left: 5px; }
.h1 { width: 40px; padding-left: 5px; }
.head.active { width: 41px; height: 27px; margin-top: -2px; padding-left: 3px; border: 3px solid #ed1c24; background: #3399ff; color: #fff; line-height: 23px; z-index: 2; }
.h3 { width: 62px; padding-left: 12px; }
.h4 { width: 68px; }
.h5 { width: 62px; }
.h6 { width: 58px; }
.h7 { width: 56px; }
.h8 { width: 78px; }
.h9 { width: 46px; }
.h11 { width: 85px; }

.tools { display: flex; align-items: center; height: 39px; flex: none; background: linear-gradient(#fbfbfb, #efefef); border-bottom: 1px solid #b4b4b4; }
.tools.last { height: 40px; border-bottom-width: 2px; }
.gap { flex: none; }
.grip { width: 5px; height: 26px; margin-right: 7px; flex: none; background: radial-gradient(circle at 1px 1px, #bbb 0.8px, transparent 1px) 0 0 / 3px 3px; }
.grip:first-child { margin-right: 3px; }
.rule { width: 1px; height: 22px; margin: 0 1px; flex: none; background: #ccc; }
.tool { display: flex; justify-content: center; width: 33px; flex: none; }
.tool svg { width: 23px; height: 23px; }
.off svg { opacity: 0.5; }
.drop { width: 15px; height: 6px; flex: none; background: #444; clip-path: polygon(1px 0, 11px 0, 6px 6px); }
.drop.off { background: #aaa; }

.work { display: flex; height: 867px; flex: none; background: #f0f0f0; border-bottom: 1px solid #b0b0b0; }
.dock { width: 288px; flex: none; display: flex; flex-direction: column; border-right: 1px solid #b0b0b0; }
h2 { margin: 0 0 0 -2px; height: 22px; font-size: 18px; font-weight: normal; line-height: 18px; letter-spacing: -0.2px; }
.second { height: 30px; margin-top: 0; line-height: 35px; }
.mini { display: flex; gap: 9px; height: 28px; padding: 3px 0 0 2px; border-bottom: 1px solid #b0b0b0; }
.mini svg { width: 16px; height: 16px; }
.tree { height: 409px; overflow: hidden; background: #fff; }
.node { display: flex; align-items: center; height: 22px; }
.l1 { padding-left: 25px; }
.l2 { padding-left: 50px; }
.node svg { width: 19px; height: 19px; margin-left: 9px; margin-right: 6px; }
.exp { width: 15px; height: 10px; }
.exp.closed { background: #555; clip-path: polygon(5px 0, 10px 5px, 5px 10px); }
.exp.open { background: #444; clip-path: polygon(2px 2px, 12px 2px, 7px 7px); }
.hscroll { display: flex; align-items: center; height: 18px; background: #e6e6e6; border: solid #b0b0b0; border-width: 1px 0; }
.left { width: 5px; height: 10px; background: #444; clip-path: polygon(5px 0, 5px 10px, 0 5px); }
.thumb { width: 80px; height: 16px; margin-left: 6px; background: #f8f8f8; border: solid #b0b0b0; border-width: 0 1px; }
.layers { flex: 1; background: #fff; }
.layer { display: flex; align-items: center; height: 22px; padding-left: 23px; }
.layer.active { background: #f0f0f0; }
.layer.active strong { font-style: italic; text-decoration: underline; }
.layer strong { letter-spacing: -0.7px; }
.sym { width: 19px; height: 20px; margin: 0 6px 0 6px; }
.box { width: 17px; height: 17px; flex: none; background: #fff; border: 1px solid #b4b4b4; }
.box svg { width: 15px; height: 15px; }
.canvas { flex: 1; margin-left: 8px; background: #fff; border-left: 1px solid #b0b0b0; }

.status { position: relative; display: flex; align-items: center; height: 30px; flex: none; background: #f0f0f0; font-size: 13px; letter-spacing: -0.4px; }
.locate { display: flex; align-items: center; gap: 9px; width: 232px; height: 24px; padding-left: 7px; background: #fff; border: 1px solid #a8a8a8; border-left: 0; border-radius: 2px; color: #b8b8b8; font-size: 13.500px; }
.locate em { padding-top: 1px; }
.locate svg { width: 12px; height: 13px; }
.lab { flex: none; padding-top: 2px; }
.s1 { width: 64px; margin-left: 774px; }
.field { position: relative; display: flex; align-items: center; height: 24px; flex: none; padding: 2px 0 0 6px; background: #fff; border: 1px solid #aaa; border-radius: 2px; overflow: hidden; }
.f1 { width: 111px; }
.track { width: 22px; height: 22px; margin-left: 2px; }
.s2 { width: 34px; margin-left: 13px; }
.f2 { width: 92px; padding-left: 3px; }
.combo { position: absolute; right: 0; top: 0; width: 25px; height: 22px; background: #f5f5f5; }
.combo::after { content: ""; position: absolute; left: 6px; top: 8px; border: 5px solid transparent; border-top: 6px solid #555; border-bottom: 0; }
.lock { width: 18px; height: 20px; margin-left: 12px; }
.s3 { width: 55px; margin-left: 8px; }
.f3 { width: 93px; padding-left: 4px; }
.spin { position: absolute; right: 0; top: 0; width: 16px; height: 22px; background: #f5f5f5; border-left: 1px solid #aaa; }
.spin::before, .spin::after { content: ""; position: absolute; left: 3px; border: 4.500px solid transparent; }
.spin::before { top: 4px; border-top: 0; border-bottom: 5px solid #555; }
.spin::after { bottom: 4px; border-bottom: 0; border-top: 5px solid #555; }
.s4 { width: 56px; margin-left: 10px; }
.f4 { width: 88px; padding-left: 5px; }
.chk { margin-left: 7px; }
.s5 { width: 52px; margin-left: 6px; }
.globe { width: 20px; height: 20px; margin-left: 6px; }
.s6 { width: 80px; margin-left: 3px; }
.chat { width: 20px; height: 20px; margin-left: 11px; }

.menu { position: absolute; left: 103px; top: 52px; width: 441px; height: 906px; background: #fff; border: 1px solid #979797; box-shadow: 4px 4px 4px -1px rgba(0, 0, 0, 0.5); }
.item { position: relative; display: flex; align-items: center; height: 28px; padding-left: 4px; }
.item.off { color: #7d7d7d; }
.item.on { width: 440px; height: 30px; margin: -1px 0 -1px -1px; padding-left: 2px; background: #3399ff; border: 3px solid #ed1c24; color: #e8f2ff; }
.ico { display: flex; align-items: center; justify-content: center; width: 25px; height: 27px; flex: none; }
.ico.held { background: #e0e0e0; border: 1px solid #adadad; border-radius: 2px; }
.ico svg { width: 19px; height: 19px; }
.text { width: 294px; margin-left: 3px; flex: none; letter-spacing: -0.06px; }
.key { flex: none; letter-spacing: 0.12px; }
.more { position: absolute; right: 5px; top: 9px; width: 5px; height: 10px; background: #555; clip-path: polygon(0 0, 5px 5px, 0 10px); }
.item.on .more { right: 2px; top: 7px; background: #a8d3ff; }
.sep { display: block; height: 2px; margin: 0 5px; border-top: 1px solid #bdbdbd; }

.submenu { position: absolute; left: 543px; top: 658px; width: 275px; height: 430px; background: #fff; border: 1px solid #979797; box-shadow: 4px 4px 4px -1px rgba(0, 0, 0, 0.5); letter-spacing: -0.06px; }
.pitem { display: flex; align-items: center; height: 28px; padding-left: 7px; gap: 7px; }
.pitem .box { width: 18px; height: 18px; margin-top: -2px; }
.pitem.on { background: #3399ff; color: #e8f2ff; }
.mark { position: absolute; left: 538px; top: 1019px; width: 282px; height: 35px; border: 7px solid #ed1c24; border-left-width: 9px; }
.pointer { position: absolute; left: 820px; top: 1002px; }
</style>
